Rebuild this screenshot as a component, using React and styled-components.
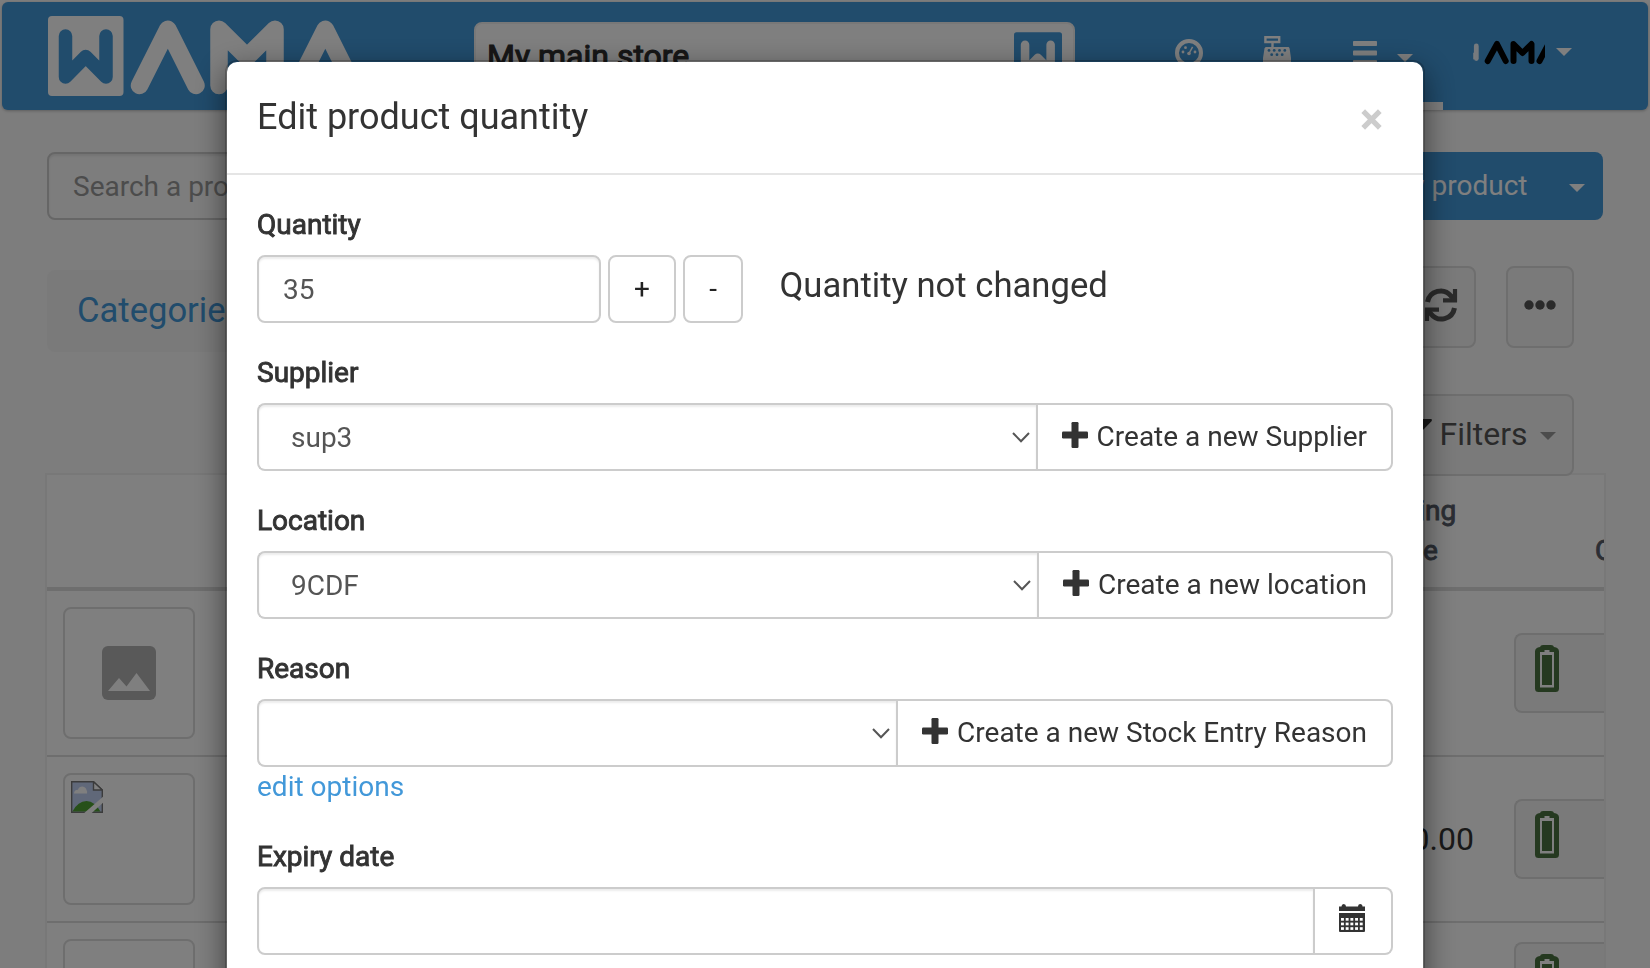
import React from "react";
import styled, { createGlobalStyle } from "styled-components";

const GlobalStyle = createGlobalStyle`
  *, *::before, *::after { box-sizing: border-box; }
  body {
    margin: 0;
    overflow: hidden;
    background: #fafafa;
    color: #333;
    font-family: Roboto, "Liberation Sans", sans-serif;
    font-size: 28px;
    line-height: 40px;
  }
  button, input { font: inherit; letter-spacing: inherit; color: inherit; margin: 0; }
  svg { display: block; flex: none; }
`;

const Page = styled.div`
  height: 968px;
  overflow: hidden;
  padding: 2px 2px 0;
  display: flex;
  flex-direction: column;
`;

const Navbar = styled.header`
  flex: none;
  height: 108px;
  padding: 0 75px 0 46px;
  display: flex;
  align-items: flex-start;
  background: #4298d9;
  border-radius: 6px;
  box-shadow: 0 1px 3px rgba(0, 0, 0, 0.25);
`;

const Brand = styled.div`
  width: 427px;
  padding-top: 14px;
`;

const StoreSelect = styled.div`
  flex: none;
  width: 601px;
  height: 68px;
  margin-top: 20px;
  padding: 8px 11px 0 11px;
  display: flex;
  justify-content: space-between;
  background: #fff;
  border: 2px solid #f0f0f0;
  border-radius: 8px;
`;

const StoreName = styled.span`
  padding-top: 4px;
  font-size: 32px;
  line-height: 40px;
  color: #2e2e2e;
  -webkit-text-stroke: 1.1px currentColor;
`;

const NavItems = styled.nav`
  flex: 1;
  height: 108px;
  display: flex;
  align-items: flex-start;
`;

const NavItem = styled.div`
  display: flex;
  align-items: flex-start;
  height: 108px;
  width: ${(p) => p.$width}px;
  padding-left: ${(p) => p.$left || 0}px;
  padding-top: ${(p) => p.$top}px;
  margin-left: ${(p) => p.$gap || 0}px;
  border-bottom: ${(p) => (p.$active ? "8px solid #fff" : "0")};
`;

const Caret = styled.span`
  flex: none;
  width: 0;
  height: 0;
  border: 8px solid transparent;
  border-bottom: 0;
  border-top-color: ${(p) => p.$color || "#fff"};
  margin-left: ${(p) => p.$left || 0}px;
  margin-top: ${(p) => p.$top || 0}px;
`;

const SearchRow = styled.div`
  flex: none;
  margin: 42px 45px 0;
  height: 68px;
  display: flex;
  justify-content: space-between;
`;

const SearchInput = styled.input`
  width: 700px;
  height: 68px;
  padding: 0 24px;
  border: 2px solid #ccc;
  border-radius: 8px;
  background: transparent;
  outline: none;
  box-shadow: inset 0 2px 2px rgba(0, 0, 0, 0.075);
  &::placeholder { color: #999; opacity: 1; }
`;

const NewProduct = styled.button`
  height: 68px;
  padding: 0 18px 1px 24px;
  display: flex;
  align-items: center;
  border: 0;
  border-radius: 8px;
  background: #4298d9;
  color: #fff;
`;

const ToolRow = styled.div`
  flex: none;
  height: 82px;
  margin: 46px 74px 0 45px;
  display: flex;
  align-items: flex-start;
`;

const Crumbs = styled.div`
  flex: 1;
  height: 82px;
  margin-top: 4px;
  padding: 20px 30px;
  border-radius: 8px;
  background: #f5f5f5;
  color: #4298d9;
  font-size: 34.6px;
`;

const ToolButton = styled.button`
  width: ${(p) => p.$width}px;
  height: 82px;
  padding: ${(p) => p.$pad || "0"};
  margin-left: ${(p) => p.$gap || 0}px;
  display: flex;
  align-items: center;
  justify-content: ${(p) => p.$justify || "center"};
  border: 2px solid #dcdcdc;
  border-radius: 8px;
  background: #f5f5f5;
  color: #555;
  font-size: 32px;
`;

const FilterRow = styled.div`
  flex: none;
  position: relative;
  z-index: 1;
  margin: 46px 74px 0 0;
  display: flex;
  justify-content: flex-end;
`;

const Table = styled.section`
  flex: 1;
  margin: -3px 42px 0 43px;
  overflow: hidden;
  background: #fff;
  border: 2px solid #f0f0f0;
  border-bottom: 0;
`;

const TableHead = styled.div`
  height: 116px;
  display: flex;
  justify-content: flex-end;
  align-items: flex-end;
  padding-bottom: 16px;
  border-bottom: 4px solid #dcdcdc;
  color: #565c68;
  text-align: center;
  -webkit-text-stroke: 0.9px currentColor;
`;

const HeadCell = styled.div`
  flex: none;
  width: ${(p) => p.$width}px;
  padding-left: ${(p) => p.$left || 0}px;
  text-align: ${(p) => p.$align || "center"};
  white-space: nowrap;
`;

const Row = styled.div`
  height: 166px;
  display: flex;
  align-items: ${(p) => (p.$top ? "flex-start" : "center")};
  padding: ${(p) => (p.$top ? "16px" : "0")} 0 0 16px;
  border-bottom: 2px solid #dcdcdc;
`;

const Thumb = styled.div`
  width: 132px;
  height: 132px;
  display: flex;
  align-items: ${(p) => (p.$broken ? "flex-start" : "center")};
  justify-content: ${(p) => (p.$broken ? "flex-start" : "center")};
  padding: ${(p) => (p.$broken ? "6px" : "0")};
  border: 2px solid #ddd;
  border-radius: 8px;
`;

const Price = styled.div`
  flex: 1;
  padding-right: 40px;
  text-align: right;
  font-size: 32px;
  color: #333;
`;

const StockButton = styled.button`
  flex: none;
  width: 90px;
  height: 80px;
  margin-top: ${(p) => p.$shift || 0}px;
  padding: 10px 0 0 19px;
  display: flex;
  align-items: flex-start;
  border: 2px solid #dcdcdc;
  border-right: 0;
  border-radius: 8px 0 0 8px;
  background: #f5f5f5;
`;

const Backdrop = styled.div`
  position: fixed;
  z-index: 10;
  inset: 0;
  overflow: hidden;
  padding-top: 60px;
  display: flex;
  justify-content: center;
  align-items: flex-start;
  background: rgba(0, 0, 0, 0.5);
`;

const Dialog = styled.div`
  width: 1200px;
  height: 1300px;
  flex: none;
  background: #fff;
  background-clip: padding-box;
  border: 2px solid rgba(0, 0, 0, 0.2);
  border-radius: 12px;
  box-shadow: 0 10px 30px rgba(0, 0, 0, 0.5);
`;

const DialogHeader = styled.div`
  height: 113px;
  padding: 30px 41px 0 30px;
  display: flex;
  justify-content: space-between;
  align-items: flex-start;
  border-bottom: 2px solid #e5e5e5;
`;

const Title = styled.h4`
  margin: 0;
  font-size: 36px;
  font-weight: 400;
  line-height: 51px;
`;

const Close = styled.button`
  padding: 17px 0 0;
  border: 0;
  background: none;
`;

const DialogBody = styled.div`
  padding: 30px;
`;

const Field = styled.div`
  margin-bottom: 30px;
`;

const Label = styled.label`
  display: block;
  margin-bottom: 10px;
  -webkit-text-stroke: 0.9px currentColor;
`;

const Group = styled.div`
  display: flex;
  align-items: flex-start;
`;

const Input = styled.input`
  width: ${(p) => p.$width}px;
  height: 68px;
  padding: 0 24px;
  border: 2px solid #ccc;
  border-radius: ${(p) => (p.$joined ? "8px 0 0 8px" : "8px")};
  background: #fff;
  box-shadow: inset 0 2px 2px rgba(0, 0, 0, 0.075);
  color: #555;
  outline: none;
`;

const Select = styled.div`
  flex: 1;
  height: 68px;
  padding: 1px 6px 0 32px;
  display: flex;
  align-items: center;
  justify-content: space-between;
  border: 2px solid #ccc;
  border-right: 0;
  border-radius: 8px 0 0 8px;
  box-shadow: inset 0 2px 2px rgba(0, 0, 0, 0.075);
  color: #555;
`;

const Step = styled.button`
  width: ${(p) => p.$width}px;
  height: 68px;
  margin-left: 7px;
  padding: 0;
  border: 2px solid #ccc;
  border-radius: 8px;
  background: #fff;
  color: #222;
`;

const Status = styled.div`
  padding: 10px 0 0 36.5px;
  font-size: 34.65px;
`;

const Addon = styled.button`
  height: 68px;
  padding: ${(p) => p.$pad || "0 24px 1px"};
  display: flex;
  align-items: center;
  gap: 9px;
  border: 2px solid #ccc;
  border-left-width: ${(p) => (p.$pad ? 0 : 2)}px;
  border-radius: 0 8px 8px 0;
  background: #fff;
  white-space: nowrap;
`;

const EditLink = styled.a`
  display: block;
  width: fit-content;
  color: #4298d9;
`;

const WamaLogo = () => (
  <svg width="316" height="80" viewBox="0 0 316 80">
    <rect width="75.5" height="80" rx="4" fill="#fff" />
    <path d="M17.5 61V20M17.5 61L37.7 40.5L58 61V20" fill="none" stroke="#4298d9" strokeWidth="13.5" strokeLinecap="round" strokeLinejoin="round" />
    <g fill="none" stroke="#fff" strokeWidth="17.5" strokeLinecap="round" strokeLinejoin="round">
      <path d="M91.5 69.5L119.8 13.2L148 69.5" />
      <path d="M171 69.5V13.2L199 41L227 13.2V69.5" />
      <path d="M249 69.5L277.3 13.2L305.5 69.5" />
    </g>
  </svg>
);

const StoreBadge = () => (
  <svg width="48" height="51" viewBox="0 0 76 80">
    <rect width="76" height="80" rx="4" fill="#4298d9" />
    <path d="M17.5 61V20M17.5 61L37.7 40.5L58 61V20" fill="none" stroke="#fff" strokeWidth="13.5" strokeLinecap="round" strokeLinejoin="round" />
  </svg>
);

const GaugeIcon = () => (
  <svg width="28" height="28" viewBox="0 0 28 28" fill="#fff">
    <circle cx="14" cy="14" r="12" fill="none" stroke="#fff" strokeWidth="4" />
    <circle cx="8" cy="13" r="1.4" />
    <circle cx="10.5" cy="8.7" r="1.4" />
    <circle cx="20" cy="13" r="1.4" />
    <circle cx="14" cy="14.5" r="1.8" />
    <path d="M14 14.5L17.6 7.8" stroke="#fff" strokeWidth="1.5" />
  </svg>
);

const RegisterIcon = () => (
  <svg width="28" height="32" viewBox="0 0 28 32">
    <path d="M2.4 1.2H16.2V6H2.4ZM9.5 6V12" fill="none" stroke="#fff" strokeWidth="2.4" />
    <path d="M3.5 11H25C26 11 26.4 11.6 26.6 12.5L28 22V32H0V22L1.5 12.5C1.8 11.6 2.4 11 3.5 11Z" fill="#fff" />
    <g fill="#4298d9">
      {[6, 11.2, 16.5, 21.8].map((x) => <circle key={x} cx={x} cy="14.4" r="1.4" />)}
      {[8.7, 14, 19.2].map((x) => <circle key={x} cx={x} cy="18.7" r="1.4" />)}
    </g>
  </svg>
);

const MenuIcon = () => (
  <svg width="24" height="24" viewBox="0 0 24 24" fill="#fff">
    <rect width="24" height="5" rx="0.8" />
    <rect y="9.5" width="24" height="5" rx="0.8" />
    <rect y="19" width="24" height="5" rx="0.8" />
  </svg>
);

const AccountLogo = () => (
  <svg width="72" height="28" viewBox="0 0 72 28" fill="none" strokeLinecap="round" strokeLinejoin="round">
    <path d="M3.3 6V18.5" stroke="#fff" strokeWidth="4.8" opacity="0.9" />
    <path d="M0 14V18" stroke="#fff" strokeWidth="3" opacity="0.7" />
    <g stroke="#000" strokeWidth="6">
      <path d="M14.7 21L24 4L32.7 21" />
      <path d="M40.5 21V4L49.5 13L58.5 4V21" />
      <path d="M66.5 21L75.5 4" />
    </g>
  </svg>
);

const RefreshIcon = () => (
  <svg width="34" height="34" viewBox="0 0 34 34" fill="none" stroke="#555" strokeWidth="5">
    <path d="M3.5 14A13.3 13.3 0 0 1 27 8L31 12" />
    <path d="M31 1V14.2M33 12.3H19" strokeWidth="4.2" />
    <path d="M30.5 20A13.3 13.3 0 0 1 7 26L3 22" />
    <path d="M3 33V19.8M1 21.7H15" strokeWidth="4.2" />
  </svg>
);

const DotsIcon = () => (
  <svg width="32" height="10" viewBox="0 0 32 10" fill="#555">
    <circle cx="5" cy="5" r="4.7" />
    <circle cx="16" cy="5" r="4.7" />
    <circle cx="27" cy="5" r="4.7" />
  </svg>
);

const FunnelIcon = () => (
  <svg width="30" height="30" viewBox="0 0 30 30" fill="#333">
    <path d="M1.5 0H28.5C30 0 30.3 1.2 29.5 2.2L19 13V30L11 24V13L0.5 2.2C-0.3 1.2 0 0 1.5 0Z" />
  </svg>
);

const BatteryIcon = () => (
  <svg width="24" height="47" viewBox="0 0 24 47">
    <path d="M5 2Q5.5 0 8 0H16Q18.5 0 19 2Q24 2.5 24 6.5V43.5Q24 47 20.5 47H3.5Q0 47 0 43.5V6.5Q0 2.5 5 2Z" fill="#4b7340" />
    <path d="M5 7H9.5V5H14.5V7H19V42.5H5Z" fill="#fff" />
    <rect x="7" y="10" width="10" height="30" fill="#4b7340" />
  </svg>
);

const ImageIcon = () => (
  <svg width="54" height="54" viewBox="0 0 54 54">
    <rect width="54" height="54" rx="6" fill="#b2b2b2" />
    <path d="M6 45L17 32L24.5 40.5L34.5 27L48 45Z" fill="#fff" />
  </svg>
);

const BrokenImageIcon = () => (
  <svg width="32" height="32" viewBox="0 0 32 32">
    <path d="M0.7 0.7H22.5L31.3 9V31.3H0.7Z" fill="#c1d0f2" stroke="#777" strokeWidth="1.4" />
    <path d="M3 12.5Q3 9 7 8.7Q8 5.5 11.5 5.5Q15 6 15.5 9Q16.5 10 16 12.5Z" fill="#fff" />
    <path d="M1.4 30.6Q7 20 15.5 20Q24 20.5 29.5 30.6Z" fill="#4fa032" />
    <path d="M22.5 0.7V9H31.3Z" fill="#fff" stroke="#777" strokeWidth="1.4" />
    <path d="M13 32.2L32.2 15.5V21.5L20.5 32.2Z" fill="#fff" />
  </svg>
);

const CloseIcon = () => (
  <svg width="21" height="21" viewBox="0 0 21 21">
    <path d="M2.2 2.2L18.8 18.8M18.8 2.2L2.2 18.8" stroke="#ccc" strokeWidth="5.2" />
  </svg>
);

const PlusShape = styled.svg`
  margin-bottom: 3px;
`;

const PlusIcon = () => (
  <PlusShape width="26" height="26" viewBox="0 0 26 26" fill="#333">
    <rect x="9.5" width="7" height="26" rx="1.2" />
    <rect y="9.5" width="26" height="7" rx="1.2" />
  </PlusShape>
);

const ChevronIcon = () => (
  <svg width="18" height="11" viewBox="0 0 18 11">
    <path d="M1 1L9 9.2L17 1" fill="none" stroke="#555" strokeWidth="2" />
  </svg>
);

const CalendarIcon = () => (
  <svg width="26" height="28" viewBox="0 0 26 28" fill="#333">
    <path d="M0 2.5H2.5Q2.5 0 4.7 0Q7 0 7 2.5H19Q19 0 21 0Q23.5 0 23.5 2.5H26V7H0ZM0 9H26V27Q26 28 25 28H1Q0 28 0 27Z" />
    <g fill="#fff">
      {[14, 18.6, 23.2].map((y) =>
        [2, 6.7, 11.4, 16.1, 20.8].map((x) => <rect key={`${x}-${y}`} x={x} y={y} width="2.9" height="2.7" />)
      )}
    </g>
  </svg>
);

const CreateButton = ({ children }) => (
  <Addon>
    <PlusIcon />
    {children}
  </Addon>
);

const products = [
  { thumb: <ImageIcon />, price: "" },
  { thumb: <BrokenImageIcon />, broken: true, price: "0.00" },
  { thumb: null, price: "", top: true },
];

export default function App() {
  return (
    <>
      <GlobalStyle />
      <Page>
        <Navbar>
          <Brand><WamaLogo /></Brand>
          <StoreSelect>
            <StoreName>My main store</StoreName>
            <StoreBadge />
          </StoreSelect>
          <NavItems>
            <NavItem $gap={100} $width={88} $top={37}><GaugeIcon /></NavItem>
            <NavItem $width={61} $top={34}><RegisterIcon /></NavItem>
            <NavItem $active $width={119} $left={29} $top={39}>
              <MenuIcon />
              <Caret $left={20} $top={13} />
            </NavItem>
            <NavItem $width={100} $gap={30} $top={38}>
              <AccountLogo />
              <Caret $left={11} $top={8} />
            </NavItem>
          </NavItems>
        </Navbar>

        <SearchRow>
          <SearchInput placeholder="Search a product" />
          <NewProduct>
            New product
            <Caret $left={41.5} $top={4} />
          </NewProduct>
        </SearchRow>

        <ToolRow>
          <Crumbs>Categories</Crumbs>
          <ToolButton $width={86} $gap={30} $pad="0 16px 4px 0" $justify="flex-end"><RefreshIcon /></ToolButton>
          <ToolButton $width={68} $gap={30} $pad="0 0 4px"><DotsIcon /></ToolButton>
        </ToolRow>

        <FilterRow>
          <ToolButton $width={210} $pad="0 16px 2px" $justify="flex-end">
            <FunnelIcon />
            &nbsp;Filters
            <Caret $color="#999" $left={12.5} $top={4} />
          </ToolButton>
        </FilterRow>

        <Table>
          <TableHead>
            <HeadCell $width={120}>Starting<br />price</HeadCell>
            <HeadCell $width={137} $left={128} $align="left">Cost</HeadCell>
          </TableHead>
          {products.map((p, i) => (
            <Row key={i} $top={p.top}>
              <Thumb $broken={p.broken}>{p.thumb}</Thumb>
              <Price>{p.price}</Price>
              <StockButton $shift={p.top ? 3 : 0}><BatteryIcon /></StockButton>
            </Row>
          ))}
        </Table>
      </Page>

      <Backdrop>
        <Dialog role="dialog">
          <DialogHeader>
            <Title>Edit product quantity</Title>
            <Close aria-label="Close"><CloseIcon /></Close>
          </DialogHeader>
          <DialogBody>
            <Field>
              <Label>Quantity</Label>
              <Group>
                <Input $width={344} defaultValue="35" />
                <Step $width={68}>+</Step>
                <Step $width={60}>-</Step>
                <Status>Quantity not changed</Status>
              </Group>
            </Field>
            <Field>
              <Label>Supplier</Label>
              <Group>
                <Select>sup3<ChevronIcon /></Select>
                <CreateButton>Create a new Supplier</CreateButton>
              </Group>
            </Field>
            <Field>
              <Label>Location</Label>
              <Group>
                <Select>9CDF<ChevronIcon /></Select>
                <CreateButton>Create a new location</CreateButton>
              </Group>
            </Field>
            <Field>
              <Label>Reason</Label>
              <Group>
                <Select><span /><ChevronIcon /></Select>
                <CreateButton>Create a new Stock Entry Reason</CreateButton>
              </Group>
              <EditLink>edit options</EditLink>
            </Field>
            <Field>
              <Label>Expiry date</Label>
              <Group>
                <Input $joined $width={1058} />
                <Addon $pad="0 26px 6px 24px"><CalendarIcon /></Addon>
              </Group>
            </Field>
          </DialogBody>
        </Dialog>
      </Backdrop>
    </>
  );
}
